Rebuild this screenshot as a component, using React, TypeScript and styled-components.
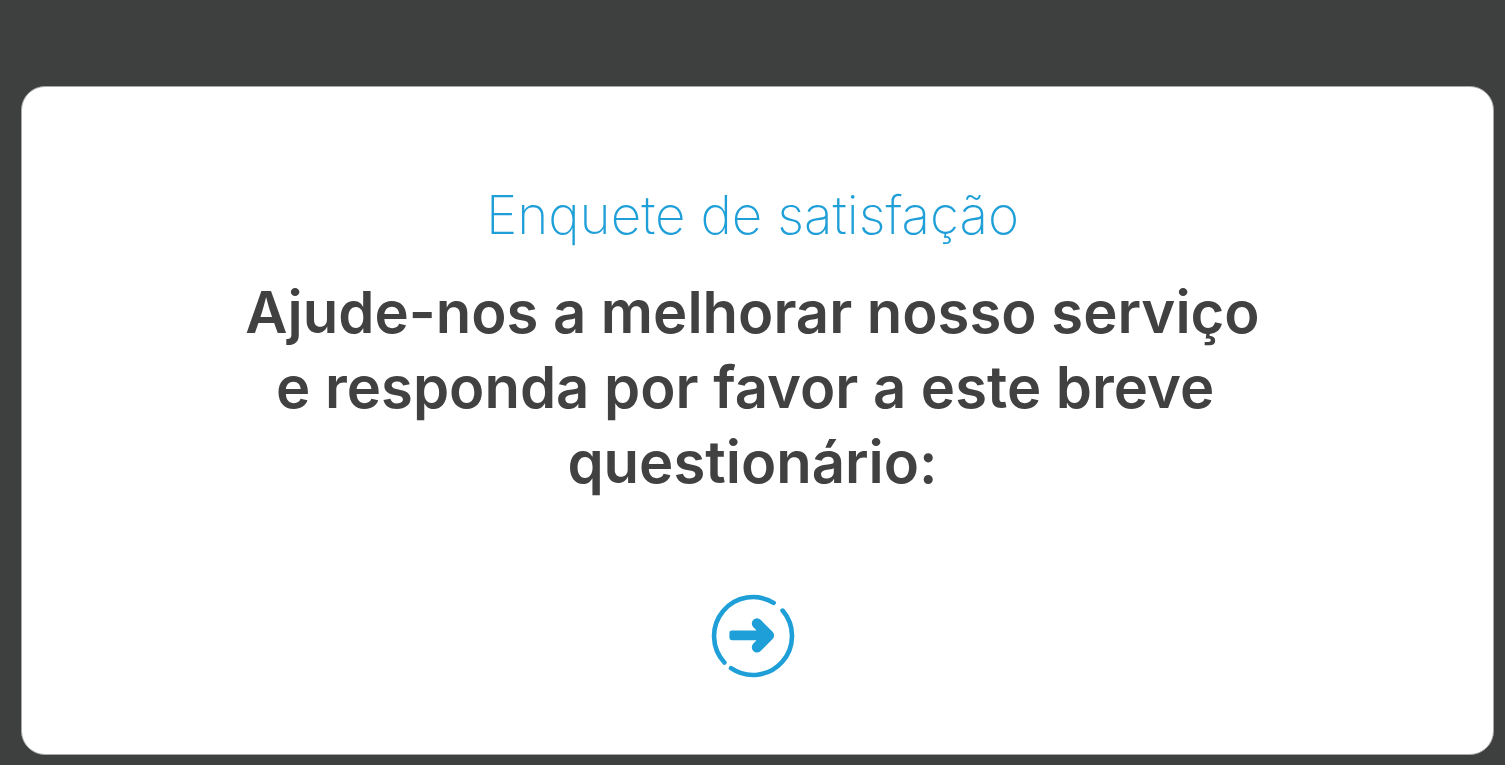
import React from "react";
import styled, { createGlobalStyle } from "styled-components";

const GlobalStyle = createGlobalStyle`
  * { box-sizing: border-box; }
  body {
    margin: 0;
    background: #3e3f3f;
    font-family: Inter, "Liberation Sans", sans-serif;
  }
`;

const Page = styled.main`
  min-height: 100vh;
  padding: 86px 11px 10px 21px;
  display: flex;
`;

const Card = styled.section`
  flex: 1;
  display: flex;
  flex-direction: column;
  align-items: center;
  padding: 96px 34px 76px 24px;
  border: 1px solid #a9a7a8;
  border-radius: 24px;
  background: #fff;
  text-align: center;
`;

const Title = styled.h1`
  margin: 0;
  color: #1f9fd8;
  font-size: 53px;
  font-weight: 200;
  line-height: 64px;
`;

const Message = styled.p`
  margin: 28px 0 0;
  color: #414141;
  font-size: 58px;
  font-weight: 600;
  line-height: 75px;
`;

const NextButton = styled.button`
  margin-top: 94px;
  padding: 0;
  border: 0;
  border-radius: 50%;
  background: none;
  color: #1f9fd8;
  cursor: pointer;

  svg { display: block; }
`;

const ArrowIcon = () => (
  <svg width="84" height="84" viewBox="-42 -42 84 84" fill="none" stroke="currentColor" aria-hidden="true">
    <g strokeWidth="4.6" strokeLinecap="round">
      <path d="M20.6 -33.1A39 39 0 0 0 -28.6 26.5" />
      <path d="M29.6 -25.4A39 39 0 0 1 -22 32.2" />
    </g>
    <rect x="-23.6" y="-5.4" width="36" height="9.6" rx="2.4" fill="currentColor" stroke="none" />
    <path d="M4 -12.5L15.9 -0.6L4 11.3" strokeWidth="10.4" strokeLinecap="round" strokeLinejoin="round" />
    <path d="M3 -6L12 -0.6L3 5Z" fill="currentColor" stroke="none" />
  </svg>
);

export default function App() {
  return (
    <>
      <GlobalStyle />
      <Page>
        <Card>
          <Title>Enquete de satisfação</Title>
          <Message>
            Ajude-nos a melhorar nosso serviço
            <br />
            e responda por favor a este breve&nbsp;
            <br />
            questionário:
          </Message>
          <NextButton type="button" aria-label="Responder ao questionário">
            <ArrowIcon />
          </NextButton>
        </Card>
      </Page>
    </>
  );
}
